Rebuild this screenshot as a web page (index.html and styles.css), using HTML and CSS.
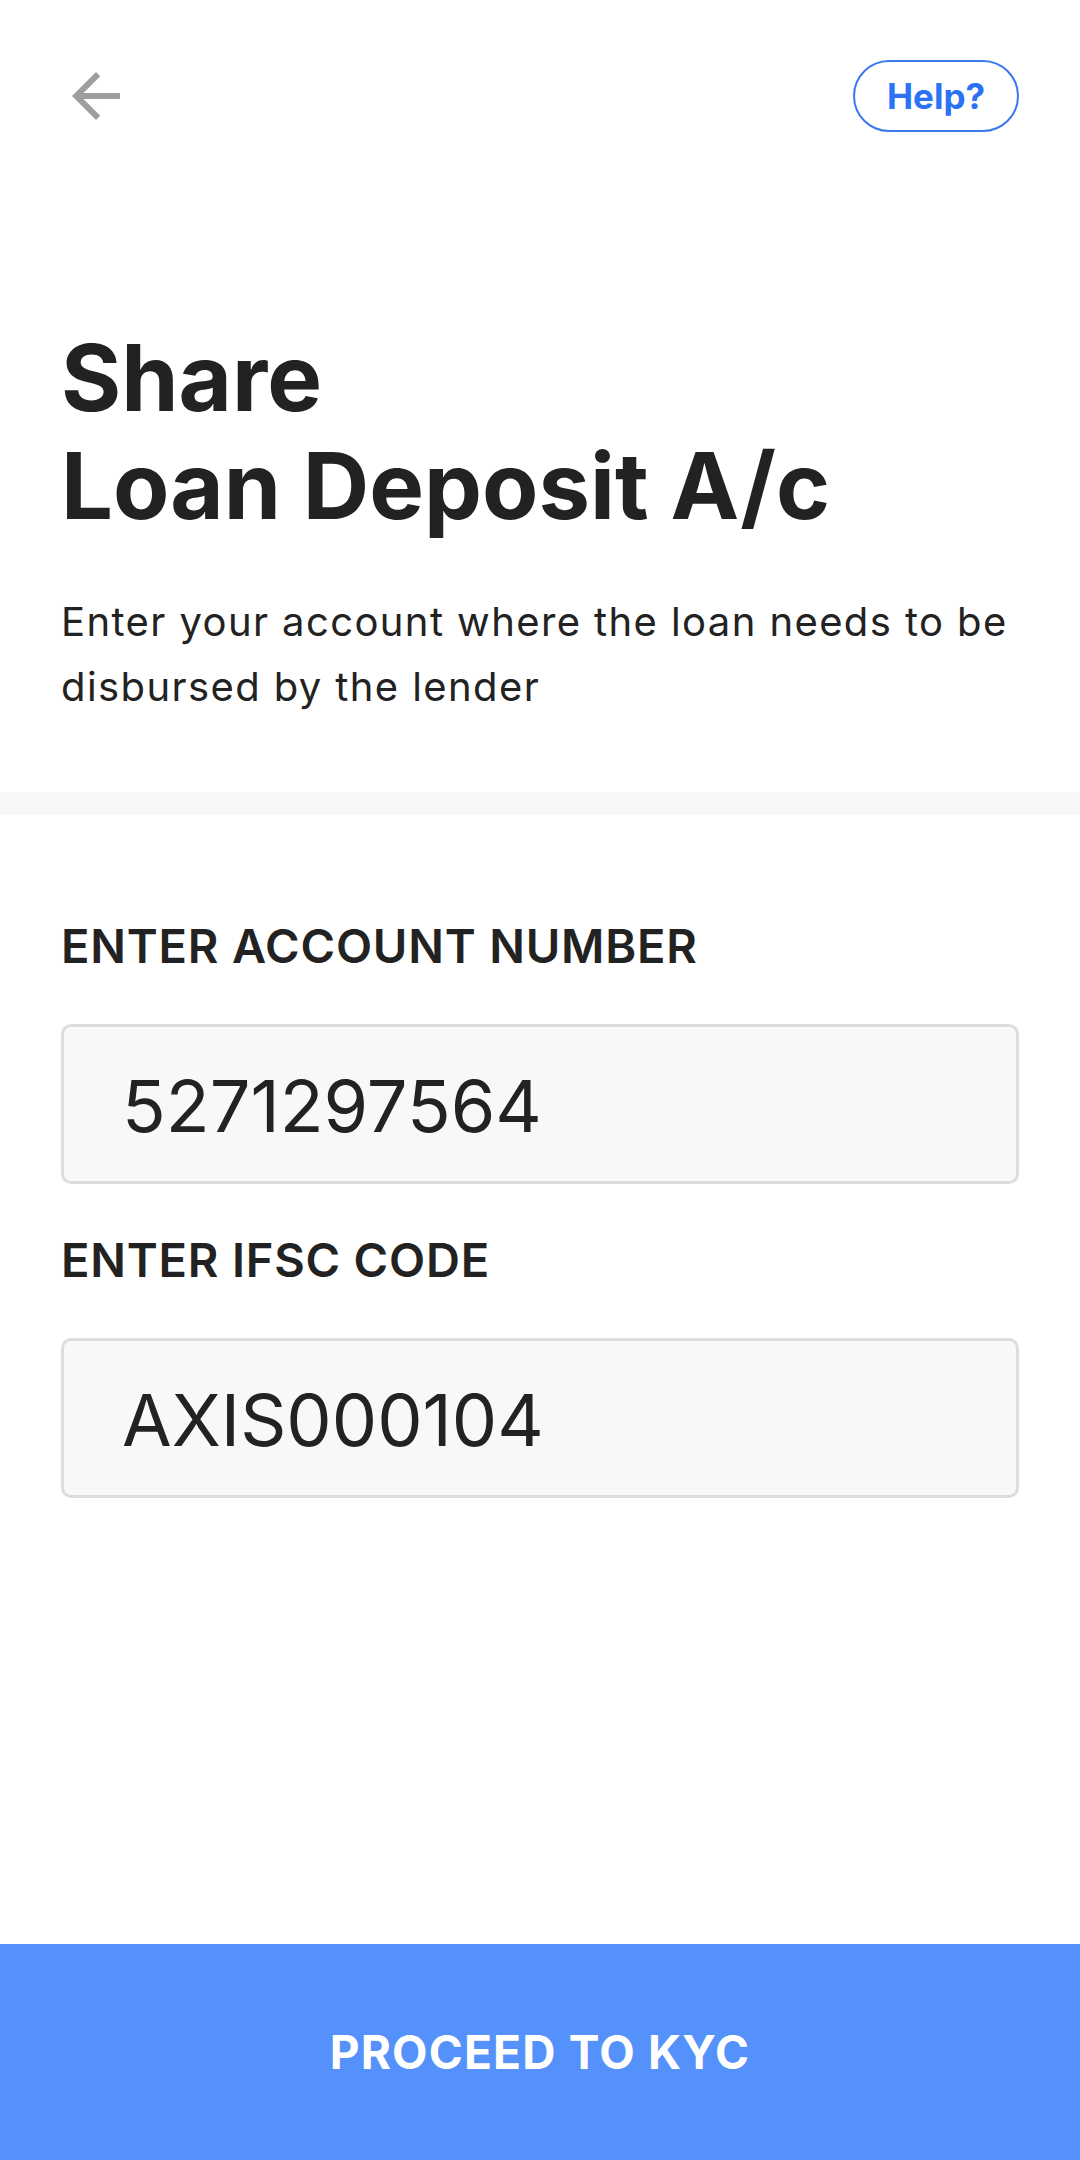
FILE: index.html
```html
<!DOCTYPE html>
<html lang="en">
<head>
<meta charset="utf-8">
<title>Share Loan Deposit A/c</title>
<link rel="stylesheet" href="styles.css">
</head>
<body>
<div class="screen">
  <header class="topbar">
    <button class="back" aria-label="Back">
      <svg viewBox="0 0 24 24" width="72" height="72"><path fill="#9e9e9e" d="M20 11H7.83l5.59-5.59L12 4l-8 8 8 8 1.41-1.41L7.83 13H20v-2z"/></svg>
    </button>
    <button class="help">Help?</button>
  </header>

  <section class="intro">
    <h1 class="title">Share<br>Loan Deposit A/c</h1>
    <p class="subtitle">Enter your account where the loan needs to be disbursed by the lender</p>
  </section>

  <div class="divider"></div>

  <section class="form">
    <label class="label">ENTER ACCOUNT NUMBER</label>
    <div class="field">5271297564</div>
    <label class="label second">ENTER IFSC CODE</label>
    <div class="field">AXIS000104</div>
  </section>

  <div class="spacer"></div>

  <button class="proceed">PROCEED TO KYC</button>
</div>
</body>
</html>
```

FILE: styles.css
```css
* { box-sizing: border-box; }
html, body { margin: 0; padding: 0; }
body {
  background: #ffffff;
  font-family: Inter, "Noto Sans", sans-serif;
  color: #222222;
}
.screen {
  width: 1080px;
  height: 2160px;
  display: flex;
  flex-direction: column;
}
.topbar {
  display: flex;
  justify-content: space-between;
  align-items: center;
  padding: 60px 61px 0 60px;
  height: 132px;
}
.back {
  width: 72px;
  height: 72px;
  padding: 0;
  border: 0;
  background: none;
  display: block;
}
.back svg { display: block; }
.help {
  width: 166px;
  height: 72px;
  border: 2px solid #3a78f2;
  border-radius: 36px;
  background: #fff;
  color: #2b72f5;
  font-family: Inter, sans-serif;
  font-weight: 700;
  font-size: 35px;
  padding: 0;
  display: flex;
  align-items: center;
  justify-content: center;
}
.intro {
  padding: 192px 61px 0 61px;
}
.title {
  margin: 0;
  font-size: 92px;
  line-height: 108px;
  font-weight: 700;
  color: #222;
}
.subtitle {
  margin: 49px 0 0 0;
  font-size: 40px;
  line-height: 65px;
  font-weight: 400;
  letter-spacing: 1.4px;
  color: #222;
}
.divider {
  margin-top: 73px;
  height: 23px;
  background: #f7f7f7;
}
.form {
  padding: 102px 61px 0 61px;
  display: flex;
  flex-direction: column;
}
.label {
  display: block;
  font-size: 47px;
  line-height: 58px;
  font-weight: 600;
  color: #222;
  letter-spacing: 0.8px;
}
.label.second { margin-top: 47px; }
.field {
  margin-top: 49px;
  height: 160px;
  border: 3px solid #dddddd;
  border-radius: 10px;
  background: #f8f8f8;
  display: flex;
  align-items: center;
  padding: 2px 0 0 58px;
  font-size: 72px;
  font-weight: 400;
  color: #222;
}
.spacer { flex: 1; }
.proceed {
  height: 216px;
  width: 100%;
  border: 0;
  background: #5591fa;
  color: #ffffff;
  font-family: Inter, sans-serif;
  font-weight: 700;
  font-size: 46px;
  letter-spacing: 1.2px;
  display: flex;
  align-items: center;
  justify-content: center;
  padding: 0;
}
```
